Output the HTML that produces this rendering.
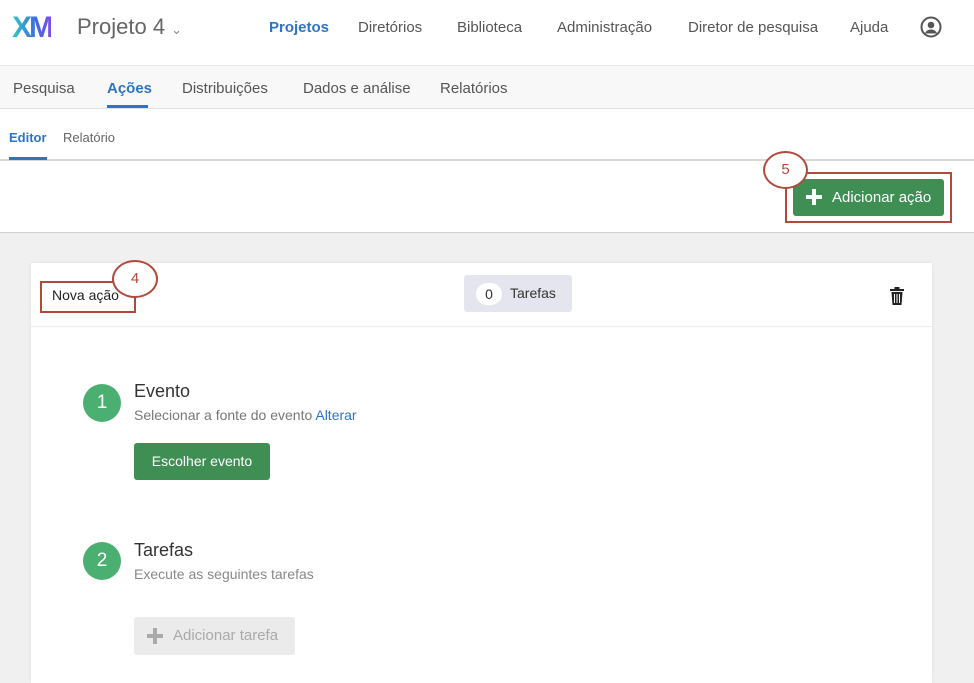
<!DOCTYPE html>
<html><head><meta charset="utf-8"><style>
*{margin:0;padding:0;box-sizing:border-box}
body{width:974px;height:662px;overflow:hidden;font-family:"Liberation Sans",Arial,sans-serif;background:#f0f0f0;position:relative;color:#333}
.a{position:absolute}
.hdr{left:0;top:0;width:974px;height:66px;background:#fff;border-bottom:1px solid #e6e6e6}
.nav2{left:0;top:66px;width:974px;height:43px;background:#f8f8f8;border-bottom:1px solid #e2e2e2}
.nav3{left:0;top:109px;width:974px;height:52px;background:#fff;border-bottom:2px solid #d8d8d8}
.tool{left:0;top:161px;width:974px;height:72px;background:#fff;border-bottom:1px solid #d0d0d0}
.t{font-size:15px;color:#555;white-space:nowrap}
.card{left:31px;top:263px;width:901px;height:420px;background:#fff;box-shadow:0 0 4px rgba(0,0,0,.08)}
.circ{border:2.5px solid #b24a3b;border-radius:50%;background:#fff;color:#b24a3b;text-align:center;font-size:15px}
.step{width:38px;height:38px;border-radius:50%;background:#4caf72;color:#fff;font-size:19px;text-align:center;line-height:38px}
</style></head><body>
<div class="a hdr"></div>
<div class="a" style="left:12px;top:11px;font-size:30px;font-weight:bold;letter-spacing:-3px;color:#2b8ad8;background:linear-gradient(90deg,#33c9c0,#3d6ee6 60%,#7b4fe0);-webkit-background-clip:text;background-clip:text;-webkit-text-fill-color:transparent">XM</div>
<div class="a" style="left:77px;top:14px;font-size:22px;color:#666">Projeto 4 <span style="font-size:13px;color:#888">&#8964;</span></div>
<div class="a t" style="left:269px;top:19px;color:#2d74c4;font-weight:bold">Projetos</div>
<div class="a t" style="left:358px;top:19px">Diretórios</div>
<div class="a t" style="left:457px;top:19px">Biblioteca</div>
<div class="a t" style="left:557px;top:19px">Administração</div>
<div class="a t" style="left:688px;top:19px">Diretor de pesquisa</div>
<div class="a t" style="left:850px;top:19px">Ajuda</div>
<svg class="a" style="left:920px;top:16px" width="22" height="22" viewBox="0 0 22 22"><circle cx="11" cy="11" r="9.5" fill="none" stroke="#555" stroke-width="2"/><circle cx="11" cy="9" r="3.3" fill="#555"/><path d="M4.8 17.5c1.5-3 3.6-4 6.2-4s4.7 1 6.2 4" fill="#555"/></svg>

<div class="a nav2"></div>
<div class="a t" style="left:13px;top:80px">Pesquisa</div>
<div class="a t" style="left:107px;top:80px;color:#2d74c4;font-weight:bold">Ações</div>
<div class="a" style="left:107px;top:105px;width:41px;height:3px;background:#2d74c4"></div>
<div class="a t" style="left:182px;top:80px">Distribuições</div>
<div class="a t" style="left:303px;top:80px">Dados e análise</div>
<div class="a t" style="left:440px;top:80px">Relatórios</div>

<div class="a nav3"></div>
<div class="a" style="left:9px;top:130px;font-size:13px;font-weight:bold;color:#2d74c4">Editor</div>
<div class="a" style="left:9px;top:157px;width:38px;height:3px;background:#2d74c4"></div>
<div class="a" style="left:63px;top:130px;font-size:13px;color:#666">Relatório</div>

<div class="a tool"></div>
<div class="a" style="left:785px;top:172px;width:167px;height:51px;border:2.5px solid #b24a3b"></div>
<div class="a" style="left:793px;top:179px;width:151px;height:37px;background:#3f8f55;border-radius:3px;color:#fff;font-size:15px;line-height:37px;padding-left:39px">Adicionar ação</div>
<div class="a" style="left:806px;top:189px;width:16px;height:4px;background:#fff;top:195px"></div>
<div class="a" style="left:812px;top:189px;width:4px;height:16px;background:#fff"></div>
<div class="a circ" style="left:763px;top:151px;width:45px;height:38px;line-height:34px">5</div>

<div class="a card"></div>
<div class="a" style="left:31px;top:326px;width:901px;height:1px;background:#ececec"></div>
<div class="a" style="left:40px;top:281px;width:96px;height:32px;border:2.5px solid #b24a3b"></div>
<div class="a" style="left:52px;top:287px;font-size:14px;color:#222">Nova ação</div>
<div class="a circ" style="left:112px;top:260px;width:46px;height:38px;line-height:34px">4</div>
<div class="a" style="left:464px;top:275px;width:108px;height:37px;background:#e4e5ee;border-radius:3px"></div>
<div class="a" style="left:476px;top:283px;width:26px;height:22px;background:#fff;border-radius:11px;text-align:center;line-height:22px;font-size:14px;color:#333">0</div>
<div class="a" style="left:510px;top:285px;font-size:14px;color:#333">Tarefas</div>
<svg class="a" style="left:889px;top:287px" width="16" height="18" viewBox="0 0 16 18"><rect x="1" y="2" width="14" height="2" fill="#222"/><rect x="5.5" y="0" width="5" height="2" fill="#222"/><path d="M2.5 5h11l-1 13h-9z" fill="#222"/><path d="M5.5 7v9M8 7v9M10.5 7v9" stroke="#fff" stroke-width="1"/></svg>

<div class="a step" style="left:83px;top:384px">1</div>
<div class="a" style="left:134px;top:381px;font-size:18px;color:#333">Evento</div>
<div class="a" style="left:134px;top:407px;font-size:14px;color:#777">Selecionar a fonte do evento <span style="color:#2d74c4">Alterar</span></div>
<div class="a" style="left:134px;top:443px;width:136px;height:37px;background:#3f8f55;border-radius:3px;color:#fff;font-size:14px;line-height:37px;text-align:center">Escolher evento</div>

<div class="a step" style="left:83px;top:542px">2</div>
<div class="a" style="left:134px;top:540px;font-size:18px;color:#333">Tarefas</div>
<div class="a" style="left:134px;top:566px;font-size:14px;color:#888">Execute as seguintes tarefas</div>
<div class="a" style="left:134px;top:617px;width:161px;height:38px;background:#ebebeb;border-radius:3px;color:#aaa;font-size:15px;line-height:38px;padding-left:39px">Adicionar tarefa</div>
<div class="a" style="left:147px;top:634px;width:16px;height:4px;background:#aaa"></div>
<div class="a" style="left:153px;top:628px;width:4px;height:16px;background:#aaa"></div>
</body></html>
